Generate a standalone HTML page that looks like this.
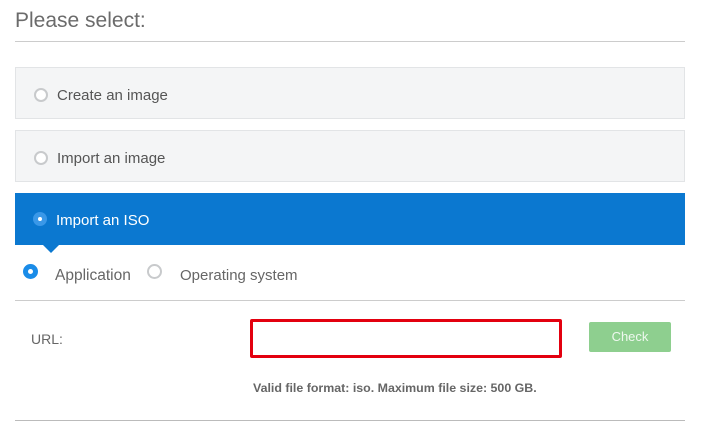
<!DOCTYPE html>
<html><head><style>
body{margin:0;width:705px;height:446px;background:#fff;font-family:"Liberation Sans",sans-serif;position:relative;overflow:hidden;color:#555}
.a{position:absolute}
.opt{position:absolute;left:15px;width:670px;height:52px;background:#f4f5f6;border:1px solid #e2e4e6;box-sizing:border-box;font-size:15px;color:#555}
.rad{position:absolute;width:14px;height:14px;border-radius:50%;border:2px solid #c8cacc;background:#fff;box-sizing:border-box}
</style></head><body>
<div class="a" style="left:15px;top:9px;font-size:21px;color:#6b6b6b">Please select:</div>
<div class="a" style="left:15px;top:41px;width:670px;height:1px;background:#ccc"></div>
<div class="opt" style="top:67px"><div class="rad" style="left:18px;top:20px"></div><div class="a" style="left:41px;top:19px">Create an image</div></div>
<div class="opt" style="top:130px"><div class="rad" style="left:18px;top:20px"></div><div class="a" style="left:41px;top:19px">Import an image</div></div>
<div class="a" style="left:15px;top:193px;width:670px;height:52px;background:#0b78d0;color:#fff;font-size:15px">
<div class="rad" style="left:18px;top:19px;border:none;background:#3a98e8"><div class="a" style="left:5px;top:5px;width:4px;height:4px;border-radius:50%;background:#fff"></div></div>
<div class="a" style="left:41px;top:19px">Import an ISO</div></div>
<div class="a" style="left:43px;top:245px;width:0;height:0;border-left:8px solid transparent;border-right:8px solid transparent;border-top:8px solid #0b78d0"></div>
<div class="a" style="left:23px;top:264px;width:15px;height:15px;border-radius:50%;background:#1a8ce8"><div class="a" style="left:5px;top:5px;width:5px;height:5px;border-radius:50%;background:#fff"></div></div>
<div class="a" style="left:55px;top:267px;font-size:15.5px;color:#666">Application</div>
<div class="rad" style="left:147px;top:264px;width:15px;height:15px;border-width:2px"></div>
<div class="a" style="left:180px;top:267px;font-size:15px;color:#666">Operating system</div>
<div class="a" style="left:15px;top:300px;width:670px;height:1px;background:#ccc"></div>
<div class="a" style="left:31px;top:331px;font-size:14px;color:#666">URL:</div>
<div class="a" style="left:250px;top:319px;width:312px;height:39px;border:3px solid #e3000f;box-sizing:border-box;border-radius:2px"></div>
<div class="a" style="left:589px;top:322px;width:82px;height:30px;background:#8ecf8f;border-radius:2px;color:#eef8ee;font-size:13px;text-align:center;line-height:30px">Check</div>
<div class="a" style="left:253px;top:381px;font-size:12.4px;font-weight:bold;color:#666">Valid file format: iso. Maximum file size: 500 GB.</div>
<div class="a" style="left:15px;top:420px;width:670px;height:1px;background:#bbb"></div>
</body></html>
